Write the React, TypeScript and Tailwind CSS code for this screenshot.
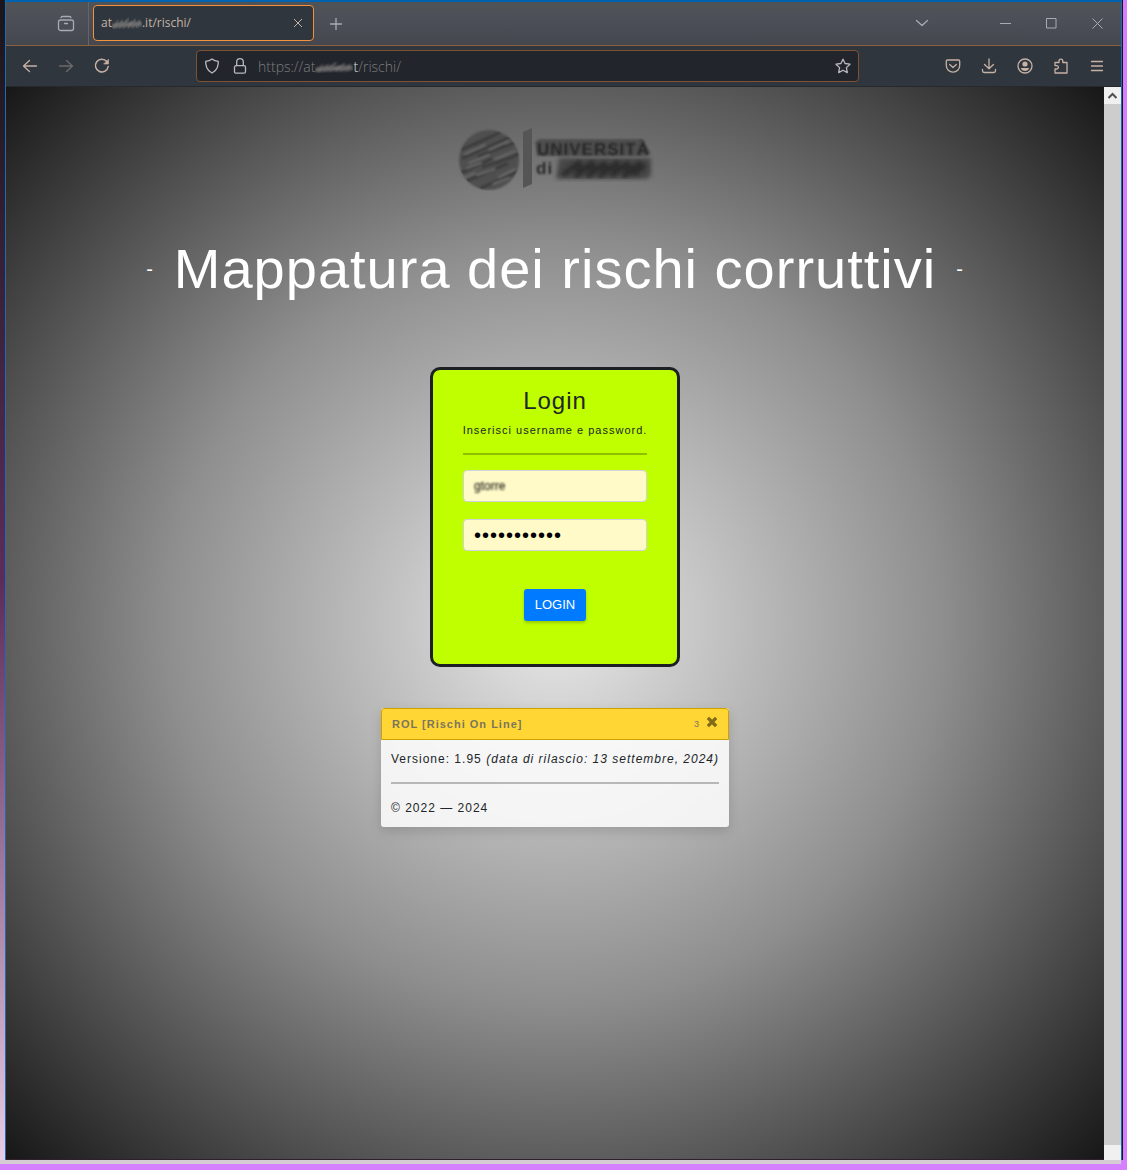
import React from "react";

type IconProps = { children: React.ReactNode; className?: string; width?: number };

function Icon({ children, className = "", width = 1.3 }: IconProps) {
  return (
    <svg
      viewBox="0 0 16 16"
      className={`size-4 ${className}`}
      fill="none"
      stroke="currentColor"
      strokeWidth={width}
      strokeLinecap="round"
      strokeLinejoin="round"
      aria-hidden="true"
    >
      {children}
    </svg>
  );
}

function Smudge({ className }: { className: string }) {
  return (
    <svg viewBox="0 0 40 12" preserveAspectRatio="none" className={className} aria-hidden="true">
      <g fill="none" stroke="#8b8886" strokeLinecap="round" className="blur-[1px]">
        <path d="M2 9 8 4M4 10 14 4M10 10 22 2M15 10 27 5M22 10 31 3M27 10 37 4M33 10 38 6" strokeWidth="1.6" opacity=".65" />
        <path d="M2 9Q18 7 38 7" strokeWidth="5" opacity=".5" />
      </g>
    </svg>
  );
}

function TabStrip() {
  return (
    <div className="flex h-11 items-stretch border-b border-[#8d6140] bg-linear-to-b from-[#505356] via-[#4b4e57] to-[#45474d] text-[#a9abb3]">
      <div className="flex w-[83px] items-center justify-end border-r border-[#62656b] pr-[13px]">
        <button aria-label="Recent browsing" className="flex">
          <svg viewBox="0 0 18 18" className="size-[18px]" fill="none" stroke="currentColor" strokeWidth="1.3" strokeLinecap="round" aria-hidden="true">
            <path d="M4 2.600Q4.200 1.500 5.500 1.500H12.500Q13.800 1.500 14 2.600" />
            <rect x="1.500" y="5" width="15" height="10.500" rx="2" />
            <path d="M7.500 8.500h3" />
          </svg>
        </button>
      </div>
      <div className="mt-[3px] mb-1 ml-1 flex w-[221px] items-center rounded border border-[#f5913e] bg-[#30363d] pr-2.5 pl-[7px] text-xs text-[#c3b3a8]">
        <span>at</span>
        <Smudge className="h-3 w-[30px]" />
        <span>.it/rischi/</span>
        <button aria-label="Close tab" className="ml-auto flex">
          <svg viewBox="0 0 10 10" className="size-2.5" stroke="currentColor" aria-hidden="true">
            <path d="M1 1l8 8M9 1l-8 8" />
          </svg>
        </button>
      </div>
      <button aria-label="New tab" className="ml-3.5 flex items-center">
        <Icon><path d="M8 2.500v11M2.500 8h11" /></Icon>
      </button>
      <div className="ml-auto flex items-center pr-[18px] pb-px">
        <button aria-label="List all tabs" className="mr-[70px] flex">
          <Icon><path d="M2.500 5.500 8 10.500l5.500-5" /></Icon>
        </button>
        <button aria-label="Minimize" className="mr-[35px] flex">
          <svg viewBox="0 0 11 11" className="size-[11px]" stroke="currentColor" aria-hidden="true"><path d="M0 5.500h11" /></svg>
        </button>
        <button aria-label="Maximize" className="mr-[35px] flex">
          <svg viewBox="0 0 11 11" className="size-[11px]" fill="none" stroke="currentColor" aria-hidden="true"><path d="M.5.500h9.500v9.500H.5z" /></svg>
        </button>
        <button aria-label="Close window" className="flex">
          <svg viewBox="0 0 11 11" className="size-[11px]" stroke="currentColor" aria-hidden="true"><path d="M.5.500l10 10M10.500.5l-10 10" /></svg>
        </button>
      </div>
    </div>
  );
}

function Toolbar() {
  return (
    <div className="flex h-[41px] items-center border-b border-[#25292e] bg-[#30363d] text-[#c6b2a5]">
      <div className="flex w-[190px] items-center gap-5 pl-4">
        <button aria-label="Back"><Icon><path d="M14.500 8h-13M7.500 2.500 1.500 8l6 5.500" /></Icon></button>
        <button aria-label="Forward" className="text-[#6e6a69]"><Icon><path d="M1.500 8h13M8.500 2.500l6 5.500-6 5.500" /></Icon></button>
        <button aria-label="Reload">
          <Icon width={1.500}><path d="M14.200 8.500A6.400 6.400 0 1 1 12.800 3.500" /><path d="M14.500 1.500v4.500h-4.500z" fill="currentColor" strokeWidth=".6" /></Icon>
        </button>
      </div>
      <div className="flex h-8 w-[663px] items-center rounded border border-[#7f5233] bg-[#22252c] px-[7px] text-[#b9babd]">
        <Icon><path d="M8 1Q10.500 3 14.300 3.300 14.500 6 13.300 9.500 12 13 8 15 4 13 2.700 9.500 1.500 6 1.700 3.300 5.500 3 8 1Z" /></Icon>
        <Icon className="ml-3"><path d="M4.700 7.500V4a3.300 3.300 0 0 1 6.600 0v3.500" /><rect x="2.500" y="7.700" width="11" height="7.500" rx="1.500" /></Icon>
        <div className="ml-2.5 flex items-center pt-0.5 text-sm text-[#7c7d7f]">
          <span className="font-light">https://at</span>
          <Smudge className="h-3 w-[38px]" />
          <span className="font-light"><span className="text-[#e0e0e0]">t</span>/rischi/</span>
        </div>
        <button aria-label="Bookmark this page" className="ml-auto">
          <Icon><path d="M8 1.200 10.100 5.500 15 6.200 11.400 9.600 12.300 14.600 8 12.200 3.700 14.600 4.600 9.600 1 6.200 5.900 5.500Z" /></Icon>
        </button>
      </div>
      <div className="ml-auto flex items-center gap-5 pr-4">
        <button aria-label="Save to Pocket"><Icon><path d="M2.500 2h11q1.200 0 1.200 1.200V7.500a6.700 6.700 0 0 1-13.400 0V3.200Q1.300 2 2.500 2Z" /><path d="M4.700 6.500 8 9.500l3.300-3" /></Icon></button>
        <button aria-label="Downloads"><Icon><path d="M8 1v9.500M3.500 6.500 8 10.700l4.500-4.200M1.500 11.500v1.300q0 1.700 1.700 1.700h9.600q1.700 0 1.700-1.700v-1.300" /></Icon></button>
        <button aria-label="Account">
          <Icon><circle cx="8" cy="8" r="7" /><circle cx="8" cy="6" r="2.600" fill="currentColor" stroke="none" /><path d="M3.800 10h8.400q-1 3-4.200 3t-4.200-3Z" fill="currentColor" stroke="none" /></Icon>
        </button>
        <button aria-label="Extensions"><Icon><path d="M2 4.500h4V3a1.900 1.900 0 0 1 3.800 0v1.500H14V15H2v-4h1.700a1.700 1.700 0 0 0 0-3.400H2Z" /></Icon></button>
        <button aria-label="Menu"><Icon><path d="M2.500 3.500h11M2.500 8h11M2.500 12.500h11" /></Icon></button>
      </div>
    </div>
  );
}

function Logo() {
  return (
    <svg viewBox="0 0 204 64" className="h-16 w-[204px]" role="img" aria-label="Università">
      <defs>
        <filter id="soft"><feGaussianBlur stdDeviation="1" /></filter>
        <filter id="softer"><feGaussianBlur stdDeviation="2" /></filter>
        <clipPath id="seal"><circle cx="36" cy="33" r="30" /></clipPath>
      </defs>
      <circle cx="36" cy="33" r="30" fill="#4f4f4f" filter="url(#soft)" />
      <g clipPath="url(#seal)" fill="none" strokeLinecap="round" filter="url(#soft)">
        <path d="M10 22 46 6M10 31 60 9M26 29 64 15M8 46 38 32M14 54 54 37M28 61 64 45M44 36 66 27M22 17 38 10M30 40 60 30M36 24 50 18" stroke="#3b3b3b" strokeWidth="2.500" />
        <path d="M12 27 32 18M36 23 56 14M14 41 28 36M42 32 62 24M24 48 42 42M46 50 62 42M16 36 36 28M10 51 22 46M40 57 56 51" stroke="#6f6f6f" strokeWidth="1.600" />
      </g>
      <path d="M70 5 79 1V57L70 61Z" fill="#555" />
      <path d="M82 15 86 12H188L198 26 192 29H84Z" fill="#505050" filter="url(#soft)" />
      <g filter="url(#soft)" fontFamily="Liberation Sans, Arial, sans-serif" fontWeight="700" fill="#262626">
        <text x="84" y="28" fontSize="17">UNIVERSITÀ</text>
        <text x="83" y="47" fontSize="17">di</text>
      </g>
      <path d="M106 31H198V49L193 52H103Z" fill="#474747" filter="url(#softer)" />
      <path d="M110 48 128 34M122 50 141 34M134 50 153 35M146 50 166 34M158 49 176 35M170 50 188 35M180 48 192 38M120 41H188" fill="none" stroke="#2b2b2b" strokeWidth="5" filter="url(#softer)" />
    </svg>
  );
}

function LoginForm() {
  return (
    <form
      onSubmit={(e) => e.preventDefault()}
      className="flex min-h-[300px] w-[250px] flex-col items-center rounded-[10px] border-3 border-[#1c2024] bg-[#bfff00] px-[30px] pt-4 text-[#212529]"
    >
      <h2 className="text-2xl leading-[29px]">Login</h2>
      <p className="mt-[7px] text-[11px] leading-4 whitespace-nowrap">Inserisci username e password.</p>
      <hr className="mt-[15px] w-full border-t-2 border-black/25" />
      <div className="mt-[15px] h-8 w-full rounded border border-[#ced4da] bg-[#fffac8] px-2.5">
        <input
          aria-label="Username"
          defaultValue="gtorre"
          className="h-full w-full bg-transparent text-xs tracking-normal text-black blur-[1px] outline-none"
        />
      </div>
      <div className="mt-[17px] h-8 w-full rounded border border-[#ced4da] bg-[#fffac8] px-2.5">
        <input
          type="password"
          aria-label="Password"
          defaultValue="password123"
          className="h-full w-full bg-transparent text-xl text-black outline-none"
        />
      </div>
      <button className="mt-[38px] h-8 rounded-[3px] bg-[#007bff] px-[11px] text-[13px] tracking-normal text-white shadow-[0_2px_3px_rgba(0,0,0,0.2)]">
        LOGIN
      </button>
    </form>
  );
}

function VersionCard() {
  return (
    <section className="mt-[41px] w-[348px] overflow-hidden rounded-[3px] bg-white/85 text-xs text-[#212529] shadow-[0_4px_12px_rgba(0,0,0,0.15)]">
      <header className="flex h-8 items-center rounded-t-[3px] border border-[#d0a000] bg-[#ffd633] px-2.5 text-[#7b755f]">
        <h3 className="text-[11px] font-bold">ROL [Rischi On Line]</h3>
        <span className="ml-auto text-[9px]">3</span>
        <button aria-label="Close" className="ml-1.5 flex pb-1 text-[#7f6b1a]">
          <svg viewBox="0 0 12 12" className="size-3" aria-hidden="true">
            <path d="M3 3 9 9M9 3 3 9" stroke="currentColor" strokeWidth="3.200" strokeLinecap="square" />
          </svg>
        </button>
      </header>
      <div className="p-2.5">
        <p className="flex justify-between leading-[18px] whitespace-nowrap">
          <span>Versione: 1.95</span>
          <em>(data di rilascio: 13 settembre, 2024)</em>
        </p>
        <hr className="mt-3.5 mb-[15px] border-t-2 border-black/25" />
        <p className="leading-[18px]">© 2022 — 2024</p>
      </div>
    </section>
  );
}

export default function App() {
  return (
    <div className="flex min-h-screen flex-col bg-[#d580ff] pb-1.5 font-['Open_Sans','Noto_Sans',sans-serif]">
      <div className="flex flex-1 bg-linear-to-b from-[#1a161c] via-[#5c2c58] via-50% to-[#e8cde6] pl-[5px]">
        <div className="flex flex-1 flex-col border-x border-t-2 border-x-[#1c6eb0] border-t-[#0063b1]">
          <TabStrip />
          <Toolbar />
          <div className="flex flex-1">
            <main className="flex flex-1 flex-col items-center border-b border-[#30202b] bg-[radial-gradient(#e8e8e8,#8e8e8e_50%,#171717)] pt-10 font-['Liberation_Sans',Arial,sans-serif] tracking-[1px]">
              <Logo />
              <h1 className="mt-11 flex items-center gap-5 text-white">
                <span className="text-xl leading-none">-</span>
                <span className="text-[56px] leading-[68px]">Mappatura dei rischi corruttivi</span>
                <span className="text-xl leading-none">-</span>
              </h1>
              <div className="mt-16 flex flex-col items-center">
                <LoginForm />
                <VersionCard />
              </div>
            </main>
            <div className="flex w-[17px] flex-col bg-[#cdcdcd]">
              <button aria-label="Scroll up" className="flex h-[17px] items-center justify-center bg-[#f0f0f0] text-[#505050]">
                <svg viewBox="0 0 9 7" className="h-[7px] w-[9px]" fill="none" stroke="currentColor" strokeWidth="2" aria-hidden="true"><path d="M.5 6 4.500 2l4 4" /></svg>
              </button>
              <div className="mt-auto h-[15px] bg-[#f0f0f0]" />
            </div>
          </div>
        </div>
        <div className="w-px bg-[#1b1420]" />
        <div className="w-1 bg-[#d580ff]" />
      </div>
      <div className="mr-1.5 h-1 bg-[#d5cdd3]" />
    </div>
  );
}
